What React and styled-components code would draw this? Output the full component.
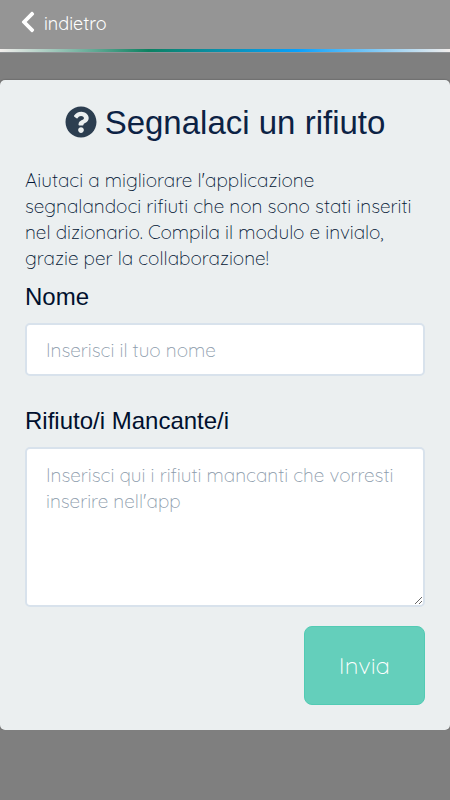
import React from "react";
import styled, { createGlobalStyle } from "styled-components";
import { FaChevronLeft, FaQuestionCircle } from "react-icons/fa";

const bodyFont = `Quicksand, Lato, "Open Sans", sans-serif`;
const headingFont = `"Liberation Sans", Arial, sans-serif`;

const GlobalStyle = createGlobalStyle`
  *, *::before, *::after { box-sizing: border-box; }
  body {
    margin: 0;
    background: #7f7f7f;
    color: #001433;
    font-family: ${bodyFont};
    font-size: 19px;
    font-weight: 300;
    line-height: 26px;
  }
`;

const Header = styled.header`
  height: 49px;
  display: flex;
  align-items: center;
  padding: 0 20px 1px;
  background: #959595;
`;

const BackLink = styled.a`
  display: flex;
  align-items: center;
  gap: 8px;
  color: #fff;
  font-size: 18px;
  font-weight: 400;
  text-decoration: none;

  svg {
    width: 16px;
    height: 24px;
    margin-bottom: 4px;
  }
`;

const GradientBar = styled.div`
  height: 4px;
  border-bottom: 1px solid #8f9295;
  background: linear-gradient(90deg, #f3efed 0%, #0c8161 33%, #08a0fc 66%, #f3efed 100%);
`;

const Card = styled.main`
  margin-top: 27px;
  padding: 25px;
  border-radius: 5px;
  background: #ebeff0;
  box-shadow: 0 0 2px rgba(0, 0, 0, 0.4);
`;

const Title = styled.h1`
  display: flex;
  align-items: center;
  justify-content: center;
  gap: 8px;
  margin: 0 0 26px;
  font-family: ${headingFont};
  font-size: 33px;
  font-weight: 400;
  line-height: 36px;
  color: #0c2244;

  svg {
    width: 32px;
    height: 32px;
    margin-bottom: 2px;
    color: #2c3e50;
  }
`;

const Intro = styled.p`
  margin: 0 0 12px;
`;

const Form = styled.form`
  display: flex;
  flex-direction: column;
`;

const Field = styled.div`
  display: flex;
  flex-direction: column;
  gap: 12px;
  margin-bottom: ${(p) => p.$gap}px;
`;

const Label = styled.label`
  font-family: ${headingFont};
  font-size: 24px;
  font-weight: 400;
  line-height: 28px;
  color: #00102e;
`;

const control = `
  display: block;
  width: 100%;
  margin: 0;
  border: 2px solid #d8e2ec;
  border-radius: 5px;
  background: #fff;
  color: #001433;
  font: inherit;
  outline-color: #64cfbb;

  &::placeholder {
    color: #8c9bab;
    opacity: 1;
  }
`;

const TextInput = styled.input`
  ${control}
  height: 53px;
  padding: 0 19px;
`;

const TextArea = styled.textarea`
  ${control}
  height: 160px;
  padding: 13px 19px;
  resize: vertical;
`;

const SubmitButton = styled.button`
  align-self: flex-end;
  height: 79px;
  padding: 0 34px 2px;
  border: 1px solid #52cbb4;
  border-radius: 8px;
  background: #64cfbb;
  color: #fff;
  font-family: ${bodyFont};
  font-size: 24px;
  font-weight: 300;
  cursor: pointer;
`;

export default function App() {
  return (
    <>
      <GlobalStyle />
      <Header>
        <BackLink href="#">
          <FaChevronLeft aria-hidden="true" />
          indietro
        </BackLink>
      </Header>
      <GradientBar />
      <Card>
        <Title>
          <FaQuestionCircle aria-hidden="true" />
          Segnalaci un rifiuto
        </Title>
        <Intro>
          Aiutaci a migliorare l'applicazione segnalandoci rifiuti che non sono
          stati inseriti nel dizionario. Compila il modulo e invialo, grazie
          per la collaborazione!
        </Intro>
        <Form onSubmit={(e) => e.preventDefault()}>
          <Field $gap={31}>
            <Label htmlFor="nome">Nome</Label>
            <TextInput id="nome" type="text" placeholder="Inserisci il tuo nome" />
          </Field>
          <Field $gap={19}>
            <Label htmlFor="rifiuti">Rifiuto/i Mancante/i</Label>
            <TextArea
              id="rifiuti"
              placeholder="Inserisci qui i rifiuti mancanti che vorresti inserire nell'app"
            />
          </Field>
          <SubmitButton type="submit">Invia</SubmitButton>
        </Form>
      </Card>
    </>
  );
}
